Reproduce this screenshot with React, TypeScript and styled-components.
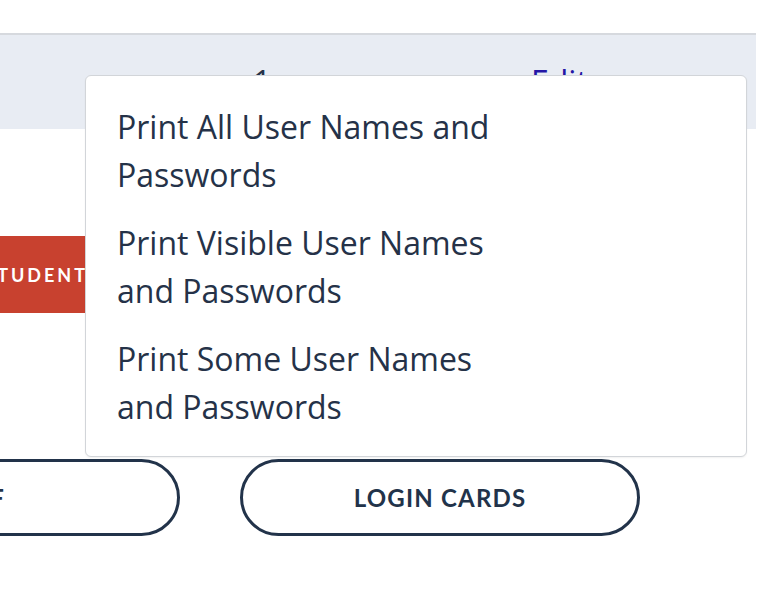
import React from "react";
import styled, { createGlobalStyle } from "styled-components";

const Global = createGlobalStyle`
  html, body { margin: 0; padding: 0; background: #ffffff; }
  body { font-family: "Open Sans", "Noto Sans", sans-serif; color: #253248; overflow: hidden; }
  #root { width: 776px; height: 602px; }
`;

const Page = styled.div`
  position: relative;
  width: 776px;
  height: 602px;
  overflow: hidden;
`;

const TopBar = styled.div`
  width: 756px;
  height: 33px;
  border-bottom: 2px solid #d6d9de;
`;

const HeaderBand = styled.div`
  width: 756px;
  height: 94px;
  box-sizing: border-box;
  padding-top: 31px;
  background: #e8ecf3;
  display: flex;
  align-items: flex-start;
  font-size: 32px;
  line-height: 1;
`;

const HeaderCell = styled.span<{ $w: number; $link?: boolean }>`
  width: ${(p) => p.$w}px;
  flex: none;
  color: ${(p) => (p.$link ? "#2416a6" : "#253248")};
`;

const Content = styled.div`
  margin-left: -220px;
  display: flex;
  flex-direction: column;
`;

const RedRow = styled.div`
  margin-top: 107px;
  display: flex;
`;

const RedButton = styled.button`
  width: 860px;
  height: 77px;
  border: none;
  background: #c8412f;
  color: #ffffff;
  font-family: Lato, "Open Sans", sans-serif;
  font-weight: 700;
  font-size: 18px;
  letter-spacing: 3px;
  text-transform: uppercase;
  display: flex;
  align-items: center;
  padding: 0 0 0 148px;
`;

const ButtonRow = styled.div`
  margin-top: 146px;
  display: flex;
  gap: 60px;
`;

const OutlineButton = styled.button`
  width: 400px;
  height: 77px;
  border: 3px solid #22334a;
  border-radius: 40px;
  background: #ffffff;
  color: #22334a;
  font-family: Lato, "Open Sans", sans-serif;
  font-weight: 700;
  font-size: 24px;
  letter-spacing: 1.2px;
  text-transform: uppercase;
  display: flex;
  align-items: center;
  justify-content: center;
  padding: 0;
`;

const Menu = styled.ul`
  position: absolute;
  left: 85px;
  top: 75px;
  width: 662px;
  height: 382px;
  box-sizing: border-box;
  margin: 0;
  padding: 17px 0 0;
  list-style: none;
  background: #ffffff;
  border: 1px solid #d2d5d9;
  border-radius: 6px;
  box-shadow: 0 1px 2px rgba(0, 0, 0, 0.06);
`;

const MenuItem = styled.li`
  padding: 10px 31px;
  font-size: 32px;
  line-height: 48px;
  color: #253248;
  max-width: 400px;
`;

export default function App() {
  return (
    <>
      <Global />
      <Page>
        <TopBar />
        <HeaderBand>
          <HeaderCell $w={253} />
          <HeaderCell $w={278}>1</HeaderCell>
          <HeaderCell $w={100} $link>Edit</HeaderCell>
        </HeaderBand>
        <Content>
          <RedRow>
            <RedButton>Add Students</RedButton>
          </RedRow>
          <ButtonRow>
            <OutlineButton>PDF</OutlineButton>
            <OutlineButton>Login Cards</OutlineButton>
          </ButtonRow>
        </Content>
        <Menu>
          <MenuItem>Print All User Names and Passwords</MenuItem>
          <MenuItem>Print Visible User Names and Passwords</MenuItem>
          <MenuItem>Print Some User Names and Passwords</MenuItem>
        </Menu>
      </Page>
    </>
  );
}
